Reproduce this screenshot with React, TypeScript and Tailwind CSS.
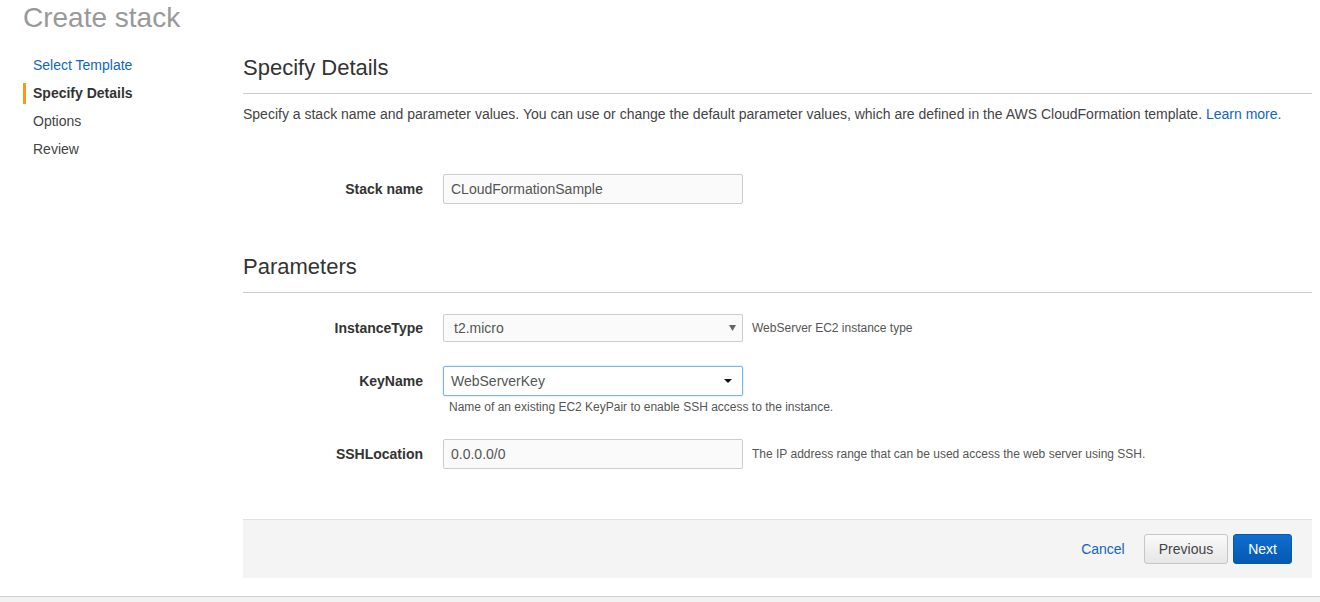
import type { ReactNode } from 'react';

const NAV = [
  { label: 'Select Template', state: 'link' },
  { label: 'Specify Details', state: 'active' },
  { label: 'Options', state: 'plain' },
  { label: 'Review', state: 'plain' },
];

function Row({ label, children, help }: { label: string; children: ReactNode; help?: string }) {
  return (
    <div className="flex items-center">
      <div className="w-[180px] shrink-0 text-right text-[14px] font-bold text-[#333]">{label}</div>
      <div className="ml-[20px]">{children}</div>
      {help && <div className="ml-[9px] text-[12px] text-[#555]">{help}</div>}
    </div>
  );
}

function Caret({ dark }: { dark?: boolean }) {
  return dark ? (
    <svg width="8" height="4" viewBox="0 0 8 4" className="shrink-0">
      <path d="M0 0 H8 L4 4 Z" fill="#111" />
    </svg>
  ) : (
    <svg width="7" height="6" viewBox="0 0 7 6" className="shrink-0">
      <path d="M0 0 H7 L3.5 6 Z" fill="#666" />
    </svg>
  );
}

export default function App() {
  return (
    <div className="h-[602px] w-[1320px] overflow-hidden bg-white font-['Liberation_Sans',Arial,sans-serif] text-[#333] flex flex-col">
      <h1 className="pl-[23px] text-[28px] leading-[36px] text-[#999]">Create stack</h1>

      <div className="mt-[15px] flex pl-[23px] pr-[8px]">
        {/* Wizard steps */}
        <ul className="w-[220px] shrink-0">
          {NAV.map(n => (
            <li key={n.label} className="flex h-[28px] items-center">
              <span className={`h-[21px] w-[3px] ${n.state === 'active' ? 'bg-[#f7981d]' : 'bg-transparent'}`} />
              <span
                className={`ml-[7px] text-[14px] ${
                  n.state === 'link' ? 'text-[#1166bb]' : n.state === 'active' ? 'font-bold text-[#333]' : 'text-[#444]'
                }`}
              >
                {n.label}
              </span>
            </li>
          ))}
        </ul>

        <main className="flex-1">
          <h2 className="border-b border-[#ccc] pb-[8px] text-[22px] leading-[34px] text-[#333]">Specify Details</h2>
          <p className="mt-[10px] text-[14px] leading-[20px] text-[#444]">
            Specify a stack name and parameter values. You can use or change the default parameter values, which are defined in the AWS CloudFormation template.{' '}
            <a className="text-[#1166bb]">Learn more.</a>
          </p>

          <div className="mt-[50px]">
            <Row label="Stack name">
              <div className="flex h-[30px] w-[300px] items-center rounded-[2px] border border-[#ccc] bg-[#fafafa] px-[7px] text-[14px] text-[#555]">
                CLoudFormationSample
              </div>
            </Row>
          </div>

          <h2 className="mt-[46px] border-b border-[#ccc] pb-[8px] text-[22px] leading-[34px] text-[#333]">Parameters</h2>

          <div className="mt-[21px] flex flex-col gap-[24px]">
            <Row label="InstanceType" help="WebServer EC2 instance type">
              <div className="flex h-[28px] w-[300px] items-center justify-between rounded-[2px] border border-[#ccc] bg-[#fafafa] pl-[10px] pr-[6px] text-[14px] text-[#555]">
                t2.micro
                <Caret />
              </div>
            </Row>

            <div>
              <Row label="KeyName">
                <div className="flex h-[30px] w-[300px] items-center justify-between rounded-[2px] border border-[#80b3e6] bg-white pl-[7px] pr-[10px] text-[14px] text-[#555] shadow-[0_0_2px_#a8cdf0]">
                  WebServerKey
                  <Caret dark />
                </div>
              </Row>
              <div className="ml-[206px] mt-[3px] text-[12px] leading-[16px] text-[#555]">
                Name of an existing EC2 KeyPair to enable SSH access to the instance.
              </div>
            </div>

            <Row label="SSHLocation" help="The IP address range that can be used access the web server using SSH.">
              <div className="flex h-[30px] w-[300px] items-center rounded-[2px] border border-[#ccc] bg-[#fafafa] px-[7px] text-[14px] text-[#555]">
                0.0.0.0/0
              </div>
            </Row>
          </div>

          {/* Footer actions */}
          <div className="mt-[50px] flex h-[59px] items-center justify-end border-t border-[#e1e1e1] bg-[#f4f4f4] pr-[20px]">
            <a className="mr-[19px] text-[14px] text-[#1166bb]">Cancel</a>
            <button className="h-[30px] rounded-[3px] border border-[#c6c6c6] bg-gradient-to-b from-[#fafafa] to-[#e6e6e6] px-[14px] text-[14px] text-[#444]">
              Previous
            </button>
            <button className="ml-[5px] h-[30px] rounded-[3px] border border-[#0b5aa6] bg-gradient-to-b from-[#0f6ed0] to-[#0559b2] px-[14px] text-[14px] text-white">
              Next
            </button>
          </div>
        </main>
      </div>

      <div className="mt-[18px] flex-1 border-t border-[#d0d0d0] bg-[#f2f2f2]" />
    </div>
  );
}
